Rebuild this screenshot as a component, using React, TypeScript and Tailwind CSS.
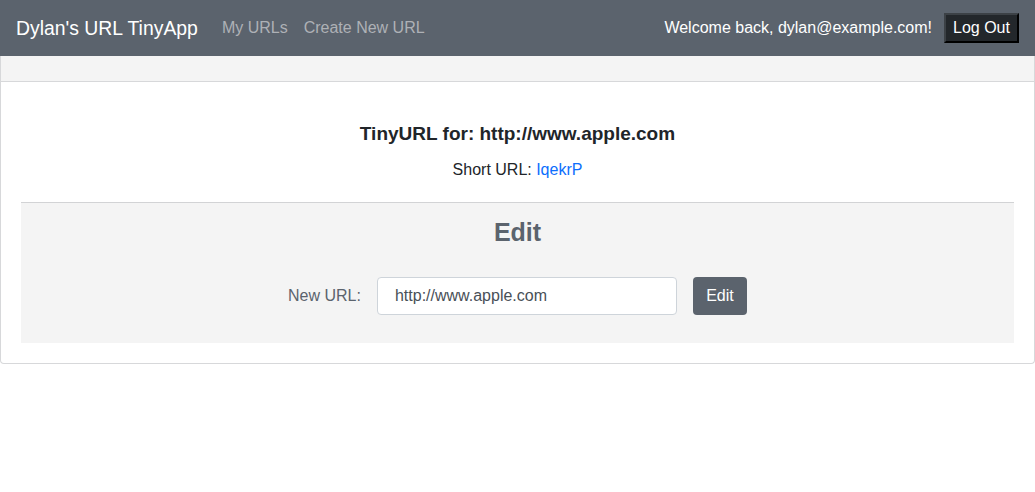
import React from "react";

export default function App() {
  const font = { fontFamily: '"Liberation Sans", Arial, sans-serif' };
  return (
    <div className="min-h-[492px] bg-white text-[#212529]" style={font}>
      <nav className="flex h-[56px] items-center bg-[#5b636d] px-4">
        <span className="mr-4 text-[19.4px] leading-[30px] text-white">Dylan's URL TinyApp</span>
        <div className="ml-[8px] flex gap-4 text-[16px] text-[#aeb1b6]">
          <span>My URLs</span>
          <span>Create New URL</span>
        </div>
        <div className="ml-auto flex items-center">
          <span className="text-[16px] text-white">Welcome back, dylan@example.com!</span>
          <button className="ml-[12px] h-[30px] w-[75px] border-2 border-t-[#3c4146] border-l-[#3c4146] border-r-black border-b-black bg-[#23272b] text-[16px] leading-none text-white">
            Log Out
          </button>
        </div>
      </nav>
      <div className="rounded-b-[4px] border border-t-0 border-[#d7d8da]">
        <div className="h-[26px] border-b border-[#d7d8da] bg-[#f4f4f4]" />
        <div className="px-5 pb-5 pt-[40px]">
          <h5 className="text-center text-[19px] font-bold leading-[24px]">TinyURL for: http://www.apple.com</h5>
          <p className="mt-[12px] text-center text-[16px] leading-[24px]">
            Short URL: <a className="text-[#0d6efd]">IqekrP</a>
          </p>
          <div className="mt-[20px] border-t border-[#d2d3d5] bg-[#f4f4f4] px-4 pb-[28px] pt-[12px]">
            <h3 className="text-center text-[25px] font-bold leading-[34px] text-[#5b636d]">Edit</h3>
            <div className="mt-[28px] flex items-center justify-center">
              <label className="text-[16px] text-[#5b636d]">New URL:</label>
              <input
                readOnly
                value="http://www.apple.com"
                className="ml-[16px] h-[38px] w-[300px] rounded-[4px] border border-[#ced4da] bg-white px-[17px] text-[16px] text-[#495057] outline-none"
                style={font}
              />
              <button className="ml-[16px] h-[38px] w-[54px] rounded-[4px] bg-[#5b636d] text-[16px] text-white">Edit</button>
            </div>
          </div>
        </div>
      </div>
    </div>
  );
}
